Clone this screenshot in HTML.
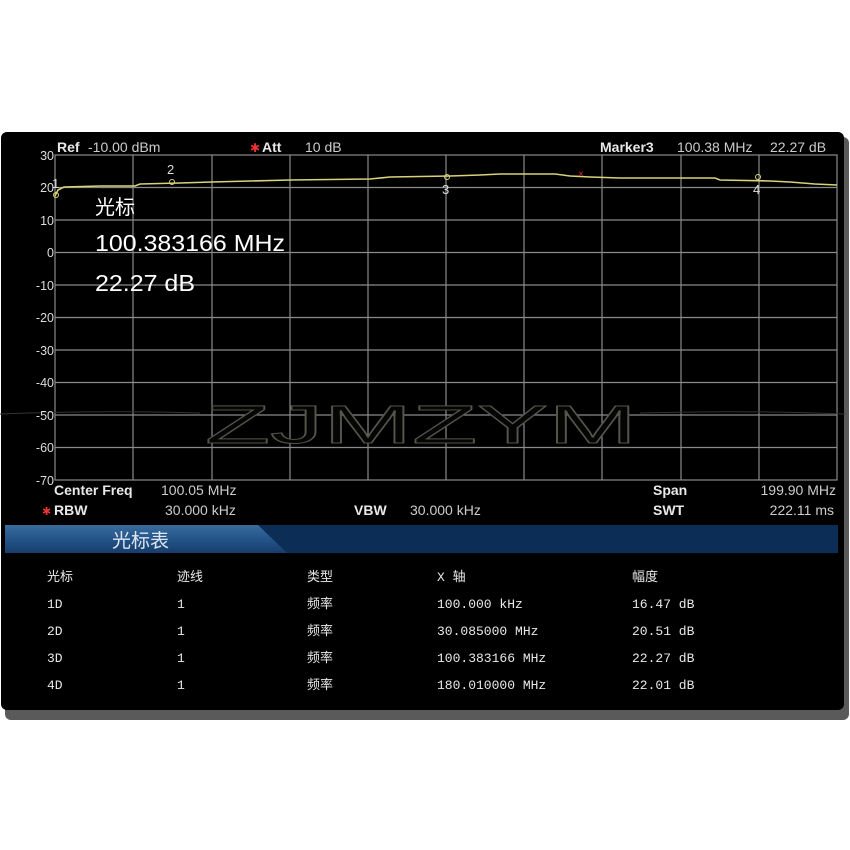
<!DOCTYPE html>
<html><head><meta charset="utf-8"><style>
html,body{margin:0;padding:0;background:#fff;width:850px;height:850px;overflow:hidden}
svg{display:block}
</style></head><body>
<svg width="850" height="850" viewBox="0 0 850 850" xmlns="http://www.w3.org/2000/svg">
<defs>
<linearGradient id="tab" x1="0" y1="0" x2="0" y2="1"><stop offset="0" stop-color="#3a6c9e"/><stop offset="0.5" stop-color="#24548a"/><stop offset="1" stop-color="#173e6c"/></linearGradient>
</defs>
<rect x="5" y="137" width="844" height="583" rx="6" fill="#5a5a5a"/>
<rect x="1" y="132" width="843" height="578" rx="6" fill="#000"/>
<!-- grid -->
<g stroke="#8a8a8a" stroke-width="1.2" fill="none">
<rect x="55" y="155" width="782" height="325"/>
<path d="M133 155V480M212 155V480M290 155V480M368 155V480M446 155V480M524 155V480M602 155V480M681 155V480M759 155V480"/>
<path d="M55 187.5H837M55 220H837M55 252.5H837M55 285H837M55 317.5H837M55 350H837M55 382.5H837M55 415H837M55 447.5H837"/>
</g>
<!-- watermark -->
<path d="M0 414 Q100 410 200 413 M640 413 Q740 410 845 414" stroke="#333" stroke-width="1" fill="none"/>
<text x="205" y="443" font-family="Liberation Sans,sans-serif" font-size="54" textLength="432" lengthAdjust="spacingAndGlyphs" fill="#050505" stroke="#55554a" stroke-width="1">ZJMZYM</text>
<!-- trace -->
<polyline fill="none" stroke="#d8d27a" stroke-width="1.6" points="55,196 58,190 64,187 100,186 135,186 140,184 180,183 212,182 250,181 290,180 370,179 390,177 450,176 480,175 500,174 555,174 570,176 590,177 620,178 715,178 720,180 770,181 790,182 815,184 837,185"/>
<g fill="none" stroke="#d8d27a" stroke-width="1"><circle cx="56" cy="195" r="2.5"/><circle cx="172" cy="182" r="2.5"/><circle cx="447" cy="177" r="2.5"/><circle cx="758" cy="177" r="2.5"/></g>
<text x="578" y="177" fill="#d23" font-size="10" font-family="Liberation Sans,sans-serif">×</text>
<g font-family="Liberation Sans,sans-serif" fill="#ddd" font-size="13">
<text x="52" y="188">1</text><text x="167" y="174">2</text><text x="442" y="194">3</text><text x="753" y="194">4</text>
</g>
<!-- y axis labels -->
<g font-family="Liberation Sans,sans-serif" fill="#ddd" font-size="12.5" text-anchor="end">
<text x="54" y="160">30</text><text x="54" y="192">20</text><text x="54" y="225">10</text><text x="54" y="257">0</text><text x="54" y="290">-10</text><text x="54" y="322">-20</text><text x="54" y="355">-30</text><text x="54" y="387">-40</text><text x="54" y="420">-50</text><text x="54" y="452">-60</text><text x="54" y="485">-70</text>
</g>
<!-- header -->
<g font-family="Liberation Sans,sans-serif" fill="#e8e8e8" font-size="14">
<text x="57" y="152" font-weight="bold">Ref</text><text x="88" y="152" fill="#ccc">-10.00 dBm</text>
<text x="250" y="152" fill="#e33" font-size="12">✱</text><text x="262" y="152" font-weight="bold">Att</text><text x="305" y="152" fill="#ccc">10 dB</text>
<text x="600" y="152" font-weight="bold">Marker3</text><text x="677" y="152" fill="#ccc">100.38 MHz</text><text x="770" y="152" fill="#ccc">22.27 dB</text>
</g>
<g font-family="Liberation Sans,'Noto Sans CJK SC',sans-serif" fill="#fff">
<text x="95" y="214" font-size="20">光标</text>
<text x="95" y="251" font-size="23" textLength="190" lengthAdjust="spacingAndGlyphs">100.383166 MHz</text>
<text x="95" y="291" font-size="23" textLength="100" lengthAdjust="spacingAndGlyphs">22.27 dB</text>
</g>
<!-- footer -->
<g font-family="Liberation Sans,sans-serif" fill="#e8e8e8" font-size="14">
<text x="54" y="495" font-weight="bold">Center Freq</text><text x="161" y="495" fill="#ccc">100.05 MHz</text>
<text x="42" y="515" fill="#e33" font-size="11">✱</text><text x="54" y="515" font-weight="bold">RBW</text><text x="165" y="515" fill="#ccc">30.000 kHz</text>
<text x="354" y="515" font-weight="bold">VBW</text><text x="410" y="515" fill="#ccc">30.000 kHz</text>
<text x="653" y="495" font-weight="bold">Span</text><text x="836" y="495" fill="#ccc" text-anchor="end">199.90 MHz</text>
<text x="653" y="515" font-weight="bold">SWT</text><text x="834" y="515" fill="#ccc" text-anchor="end">222.11 ms</text>
</g>
<!-- blue bar -->
<rect x="5" y="525" width="833" height="28" fill="#0c2d55"/>
<polygon points="5,525 258,525 287,553 5,553" fill="url(#tab)"/>
<text x="112" y="547" font-family="'Noto Sans CJK SC',sans-serif" font-size="19" fill="#dde6ef">光标表</text>
<!-- table -->
<g font-family="'Liberation Mono','Noto Sans CJK SC',monospace" fill="#e8e8e8" font-size="13">
<text x="47" y="581">光标</text><text x="177" y="581">迹线</text><text x="307" y="581">类型</text><text x="437" y="581">X 轴</text><text x="632" y="581">幅度</text>
<text x="47" y="608">1D</text><text x="177" y="608">1</text><text x="307" y="608">频率</text><text x="437" y="608">100.000 kHz</text><text x="632" y="608">16.47 dB</text>
<text x="47" y="635">2D</text><text x="177" y="635">1</text><text x="307" y="635">频率</text><text x="437" y="635">30.085000 MHz</text><text x="632" y="635">20.51 dB</text>
<text x="47" y="662">3D</text><text x="177" y="662">1</text><text x="307" y="662">频率</text><text x="437" y="662">100.383166 MHz</text><text x="632" y="662">22.27 dB</text>
<text x="47" y="689">4D</text><text x="177" y="689">1</text><text x="307" y="689">频率</text><text x="437" y="689">180.010000 MHz</text><text x="632" y="689">22.01 dB</text>
</g>
</svg>
</body></html>
